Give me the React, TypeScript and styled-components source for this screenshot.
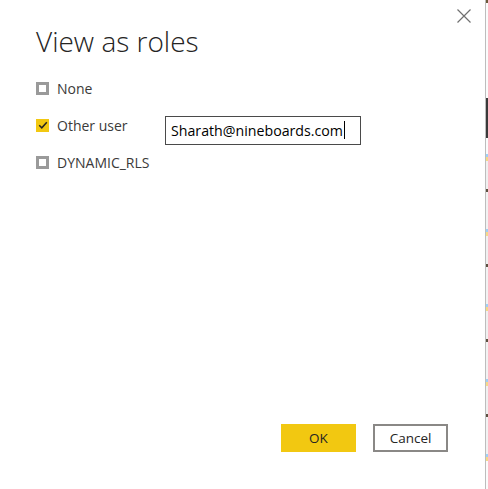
import * as React from "react"
import styled, { createGlobalStyle } from "styled-components"

const GlobalStyle = createGlobalStyle`
  html, body {
    margin: 0;
    padding: 0;
    background: #ffffff;
  }
  body {
    font-family: "Open Sans", "Noto Sans", sans-serif;
    color: #252423;
  }
`

const Page = styled.div`
  width: 488px;
  height: 489px;
  display: flex;
  flex-direction: row;
  overflow: hidden;
`

const Dialog = styled.div`
  position: relative;
  flex: 1;
  display: flex;
  flex-direction: column;
  padding: 22px 37px 37px 36px;
  background: #ffffff;
`

const Divider = styled.div`
  width: 1px;
  background: #bdbdbd;
`

/* the bit of the report that peeks out behind the dialog */
const Behind = styled.div`
  width: 2px;
  display: flex;
  flex-direction: column;
  background: #fbfbfb;
`

const BehindMark = styled.div<{ $h: number; $color: string }>`
  height: ${p => p.$h}px;
  background: ${p => p.$color};
`

const CloseButton = styled.button`
  position: absolute;
  top: 8px;
  right: 13px;
  width: 16px;
  height: 16px;
  padding: 0;
  border: none;
  background: transparent;
  display: flex;
  align-items: center;
  justify-content: center;
  cursor: pointer;
`

const Title = styled.h1`
  margin: 0 0 16px 0;
  font-weight: 300;
  font-size: 28px;
  line-height: 38px;
  color: #252423;
`

const Options = styled.div`
  display: flex;
  flex-direction: column;
  gap: 13px;
`

const Row = styled.div`
  display: flex;
  align-items: center;
  height: 24px;
`

const Box = styled.span<{ $checked?: boolean }>`
  box-sizing: border-box;
  width: 13px;
  height: 13px;
  flex: none;
  border: 3px solid ${p => (p.$checked ? "#f2c811" : "#9a9a9a")};
  background: ${p => (p.$checked ? "#f2c811" : "#ffffff")};
  display: flex;
  align-items: center;
  justify-content: center;
`

const Label = styled.span<{ $width?: number }>`
  margin-left: 8px;
  font-size: 14px;
  color: #3b3a39;
  ${p => (p.$width ? `width: ${p.$width}px;` : "")}
`

const UserInput = styled.div`
  box-sizing: border-box;
  width: 196px;
  height: 29px;
  margin-top: 10px;
  border: 1px solid #4a4a4a;
  padding: 0 5px;
  display: flex;
  align-items: center;
  font-size: 14.2px;
  color: #000000;
`

const Caret = styled.span`
  display: inline-block;
  width: 1px;
  height: 18px;
  background: #000000;
  margin-left: 1px;
`

const Footer = styled.div`
  margin-top: auto;
  display: flex;
  justify-content: flex-end;
  gap: 17px;
`

const Button = styled.button<{ $primary?: boolean }>`
  box-sizing: border-box;
  width: 75px;
  height: 28px;
  font-family: "Open Sans", "Noto Sans", sans-serif;
  font-size: 13.5px;
  color: #252423;
  background: ${p => (p.$primary ? "#f2c811" : "#ffffff")};
  border: ${p => (p.$primary ? "none" : "2px solid #8a8886")};
  cursor: pointer;
  padding: 0;
`

const Check = () => (
  <svg width="10" height="10" viewBox="0 0 10 10" style={{ flex: "none" }}>
    <path d="M1.2 5.2 L3.8 7.8 L8.8 2.2" fill="none" stroke="#252423" strokeWidth="1.5" />
  </svg>
)

const CloseIcon = () => (
  <svg width="14" height="14" viewBox="0 0 14 14">
    <path d="M0.5 0.5 L13.5 13.5 M13.5 0.5 L0.5 13.5" stroke="#707070" strokeWidth="1.2" />
  </svg>
)

const behindMarks = [
  { h: 3, color: "#6b5a3a" },
  { h: 95, color: "#fbfbfb" },
  { h: 40, color: "#3a3a3a" },
  { h: 16, color: "#fbfbfb" },
  { h: 3, color: "#9fd0f5" },
  { h: 4, color: "#f5d98a" },
  { h: 28, color: "#f0f0f0" },
  { h: 3, color: "#5c5040" },
  { h: 37, color: "#f2f2f2" },
  { h: 3, color: "#9fd0f5" },
  { h: 4, color: "#f5d98a" },
  { h: 28, color: "#f0f0f0" },
  { h: 3, color: "#5c5040" },
  { h: 37, color: "#f2f2f2" },
  { h: 3, color: "#9fd0f5" },
  { h: 4, color: "#f5d98a" },
  { h: 28, color: "#f0f0f0" },
  { h: 3, color: "#5c5040" },
  { h: 37, color: "#f2f2f2" },
  { h: 3, color: "#9fd0f5" },
  { h: 4, color: "#f5d98a" },
  { h: 28, color: "#f0f0f0" },
  { h: 3, color: "#5c5040" },
  { h: 37, color: "#f2f2f2" },
  { h: 3, color: "#9fd0f5" },
  { h: 4, color: "#f5d98a" },
]

export default function App() {
  return (
    <>
      <GlobalStyle />
      <Page>
        <Dialog>
          <CloseButton aria-label="Close">
            <CloseIcon />
          </CloseButton>
          <Title>View as roles</Title>
          <Options>
            <Row>
              <Box />
              <Label>None</Label>
            </Row>
            <Row>
              <Box $checked>
                <Check />
              </Box>
              <Label $width={108}>Other user</Label>
              <UserInput>
                Sharath@nineboards.com
                <Caret />
              </UserInput>
            </Row>
            <Row>
              <Box />
              <Label>DYNAMIC_RLS</Label>
            </Row>
          </Options>
          <Footer>
            <Button $primary>OK</Button>
            <Button>Cancel</Button>
          </Footer>
        </Dialog>
        <Divider />
        <Behind>
          {behindMarks.map((m, i) => (
            <BehindMark key={i} $h={m.h} $color={m.color} />
          ))}
        </Behind>
      </Page>
    </>
  )
}
